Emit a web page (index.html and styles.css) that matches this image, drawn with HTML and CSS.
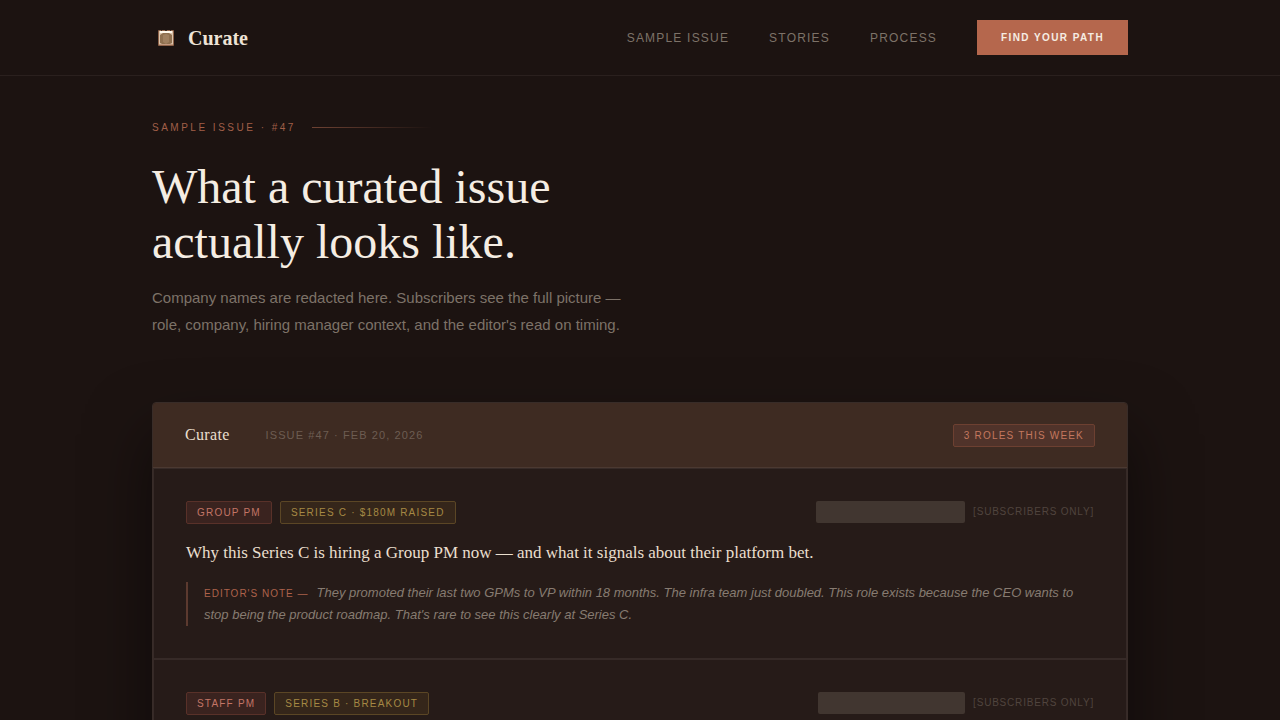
FILE: index.html
```html
<!DOCTYPE html>
<html lang="en">
<head>
<meta charset="utf-8">
<meta name="viewport" content="width=device-width, initial-scale=1">
<title>Curate – Sample Issue</title>
<link rel="stylesheet" href="styles.css">
</head>
<body>
<header class="site-header">
  <nav class="container nav">
    <a class="brand" href="#">
      <svg class="brand-mark" viewBox="0 0 28 28" aria-hidden="true">
        <rect x="6" y="6" width="16" height="16" rx="1" fill="#8e6349"/>
        <rect x="7" y="7" width="14" height="14" fill="#dcc5ad"/>
        <path d="M8 7h12v2H8z" fill="#fff8ec"/>
        <path d="M9 6h1v1H9zM13 6h2v1h-2zM18 6h1v1h-1z" fill="#3a2a20"/>
        <path d="M8 11l3-2h6l3 2v8l-2 1h-8l-2-1z" fill="#8f7050"/>
        <path d="M11 11l3-1 3 1v7l-3 2-3-2z" fill="#a08060"/>
        <path d="M7 20h14v1H7z" fill="#c39a80"/>
      </svg>
      <span>Curate</span>
    </a>
    <div class="nav-links">
      <a class="nav-link" href="#issue">Sample Issue</a>
      <a class="nav-link" href="#stories">Stories</a>
      <a class="nav-link" href="#process">Process</a>
      <a class="nav-cta" href="#path">Find your path</a>
    </div>
  </nav>
</header>
<main class="container">
  <section class="intro">
    <p class="eyebrow">Sample Issue · #47</p>
    <h1 class="title">What a curated issue<br>actually looks like.</h1>
    <p class="lead">Company names are redacted here. Subscribers see the full picture — role, company, hiring manager context, and the editor's read on timing.</p>
  </section>
  <section class="issue" id="issue">
    <header class="issue-header">
      <div class="issue-id">
        <span class="issue-brand">Curate</span>
        <span class="issue-date">Issue #47 · Feb 20, 2026</span>
      </div>
      <span class="tag tag-count">3 roles this week</span>
    </header>
    <article class="role">
      <div class="role-meta">
        <div class="tags">
          <span class="tag tag-role">Group PM</span>
          <span class="tag tag-stage">Series C · $180M raised</span>
        </div>
        <div class="company">
          <span class="redacted redacted-wide"></span>
          <span class="locked">[Subscribers only]</span>
        </div>
      </div>
      <h2 class="role-title">Why this Series C is hiring a Group PM now — and what it signals about their platform bet.</h2>
      <p class="note"><span class="note-label">Editor's note —</span>They promoted their last two GPMs to VP within 18 months. The infra team just doubled. This role exists because the CEO wants to stop being the product roadmap. That's rare to see this clearly at Series C.</p>
    </article>
    <article class="role">
      <div class="role-meta">
        <div class="tags">
          <span class="tag tag-role">Staff PM</span>
          <span class="tag tag-stage">Series B · Breakout</span>
        </div>
        <div class="company">
          <span class="redacted"></span>
          <span class="locked">[Subscribers only]</span>
        </div>
      </div>
    </article>
  </section>
</main>
</body>
</html>
```
FILE: styles.css
```css
* {
  box-sizing: border-box;
}

body {
  margin: 0;
  background: #1c1311;
  color: #f5ede3;
  font-family: "Liberation Sans", Arial, sans-serif;
  overflow-x: hidden;
  scrollbar-width: none;
}

h1, h2, p {
  margin: 0;
  font-weight: 400;
}

a {
  color: inherit;
  text-decoration: none;
}

.container {
  max-width: 1040px;
  margin: 0 auto;
  padding: 0 32px;
}

.site-header {
  border-bottom: 1px solid #2a201e;
}

.nav {
  display: flex;
  align-items: center;
  justify-content: space-between;
  padding-top: 20px;
  padding-bottom: 20px;
}

.brand {
  display: flex;
  align-items: center;
  gap: 8px;
  color: #eee3d6;
  font-family: "Liberation Serif", "Times New Roman", serif;
  font-size: 20px;
  font-weight: 700;
  line-height: 28px;
}

.brand-mark {
  width: 28px;
  height: 28px;
}

.nav-links {
  display: flex;
  align-items: center;
  gap: 40px;
  text-transform: uppercase;
}

.nav-link {
  color: #7d7268;
  font-size: 12px;
  letter-spacing: 0.1em;
}

.nav-cta {
  padding: 11px 24px;
  background: #b5674d;
  color: #f5ede3;
  font-size: 10px;
  font-weight: 700;
  line-height: 13px;
  letter-spacing: 0.14em;
}

.intro {
  padding: 44px 0 64px;
}

.eyebrow {
  display: flex;
  align-items: center;
  gap: 16px;
  margin-bottom: 24px;
  color: #a15f48;
  font-size: 10px;
  line-height: 15px;
  letter-spacing: 0.25em;
  text-transform: uppercase;
}

.eyebrow::after {
  content: "";
  width: 120px;
  height: 1px;
  background: linear-gradient(90deg, #6e4233, transparent);
}

.title {
  margin-bottom: 15px;
  font-family: "Liberation Serif", "Times New Roman", serif;
  font-size: 48px;
  line-height: 55px;
}

.lead {
  max-width: 480px;
  color: #7d7268;
  font-size: 15px;
  line-height: 27px;
}

.issue {
  border: 1px solid #382c28;
  border-radius: 4px;
  background: #261b18;
  box-shadow: 0 32px 64px rgba(0, 0, 0, 0.5);
}

.issue-header {
  display: flex;
  align-items: center;
  justify-content: space-between;
  padding: 20px 32px;
  border-bottom: 1px solid #4b3931;
  border-radius: 3px 3px 0 0;
  background: #3e2b22;
}

.issue-id {
  display: flex;
  align-items: center;
  gap: 36px;
}

.issue-brand {
  color: #eadfce;
  font-family: "Liberation Serif", "Times New Roman", serif;
  font-size: 16px;
  line-height: 24px;
  letter-spacing: 0.02em;
}

.issue-date {
  color: #6d5d52;
  font-size: 11px;
  letter-spacing: 0.1em;
  text-transform: uppercase;
}

.tag {
  padding: 5px 10px;
  border: 1px solid;
  border-radius: 2px;
  font-size: 10px;
  line-height: 11px;
  letter-spacing: 0.12em;
  text-transform: uppercase;
}

.tag-count {
  border-color: #6d4031;
  background: #50332a;
  color: #c3785f;
}

.tag-role {
  border-color: #593129;
  background: #3a231f;
  color: #c37566;
}

.tag-stage {
  border-color: #5b4625;
  background: #35261a;
  color: #a58944;
}

.role {
  padding: 32px;
  border: 1px solid #362a27;
}

.role-meta {
  display: flex;
  justify-content: space-between;
  margin-bottom: 16px;
}

.tags,
.company {
  display: flex;
  gap: 8px;
}

.redacted {
  width: 147px;
  height: 22px;
  border-radius: 2px;
  background: #413630;
}

.redacted-wide {
  width: 149px;
}

.locked {
  color: #50443e;
  font-size: 10px;
  line-height: 22px;
  letter-spacing: 0.08em;
  text-transform: uppercase;
}

.role-title {
  margin-bottom: 16px;
  color: #eadfce;
  font-family: "Liberation Serif", "Times New Roman", serif;
  font-size: 17px;
  line-height: 26px;
}

.note {
  padding-left: 16px;
  border-left: 2px solid #5c3a2f;
  color: #877b71;
  font-size: 13px;
  font-style: italic;
  line-height: 22px;
}

.note-label {
  margin-right: 8px;
  color: #ad624b;
  font-size: 10px;
  font-style: normal;
  line-height: 1;
  letter-spacing: 0.1em;
  text-transform: uppercase;
}
```
